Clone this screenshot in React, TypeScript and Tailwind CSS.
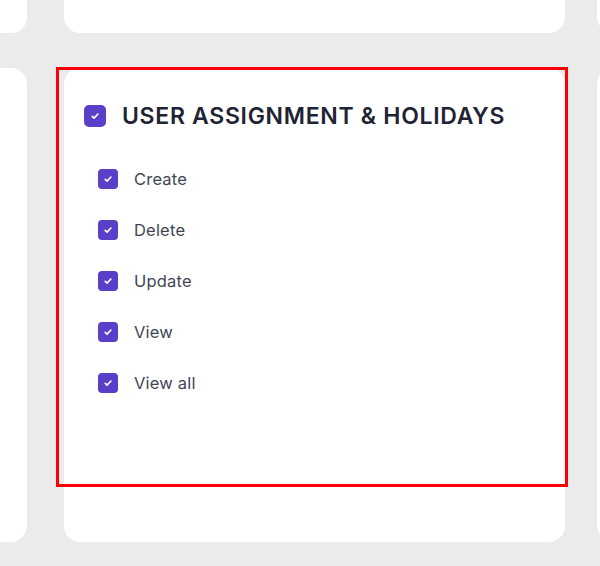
import React from "react";

function Check({ size }: { size: number }) {
  const s = size === 22 ? "w-[22px] h-[22px] rounded-[5px]" : "w-[20px] h-[20px] rounded-[4px]";
  return (
    <div className={`${s} bg-[#5a3fc8] flex items-center justify-center shrink-0`}>
      <svg width="10" height="10" viewBox="0 0 10 10" fill="none">
        <path d="M2.2 5.3 L4.1 7.1 L7.9 3" stroke="white" strokeWidth="1.6" strokeLinecap="round" strokeLinejoin="round" />
      </svg>
    </div>
  );
}

export default function App() {
  const items = ["Create", "Delete", "Update", "View", "View all"];
  return (
    <div className="relative w-[600px] h-[566px] overflow-hidden bg-[#ebebeb]" style={{ fontFamily: "Inter, 'Noto Sans', sans-serif" }}>
      <div className="flex flex-col ml-[-200px]">
        <div className="flex h-[33px]">
          <div className="w-[227px] bg-white rounded-b-2xl shrink-0" />
          <div className="w-[501px] ml-[37px] bg-white rounded-b-2xl shrink-0" />
          <div className="w-[200px] ml-[32px] bg-white rounded-b-2xl shrink-0" />
        </div>
        <div className="flex h-[474px] mt-[35px]">
          <div className="w-[227px] bg-white rounded-2xl shrink-0" />
          <div className="w-[501px] ml-[37px] bg-white rounded-2xl shrink-0 flex flex-col pt-[36px] pl-5">
            <div className="flex items-center h-[24px] gap-[16px]">
              <Check size={22} />
              <span className="text-[23px] font-semibold text-[#1f2433] tracking-[0.7px] leading-none">USER ASSIGNMENT &amp; HOLIDAYS</span>
            </div>
            <div className="flex flex-col gap-[31px] mt-[41px] pl-[14px]">
              {items.map((it) => (
                <div key={it} className="flex items-center h-[20px] gap-[16px]">
                  <Check size={20} />
                  <span className="text-[16.5px] text-[#414655] tracking-[0.2px] leading-none">{it}</span>
                </div>
              ))}
            </div>
          </div>
          <div className="w-[200px] ml-[32px] bg-white rounded-2xl shrink-0" />
        </div>
      </div>
      <div className="absolute left-[56px] top-[67px] w-[512px] h-[420px] border-[3px] border-[#ff0000]" />
    </div>
  );
}
